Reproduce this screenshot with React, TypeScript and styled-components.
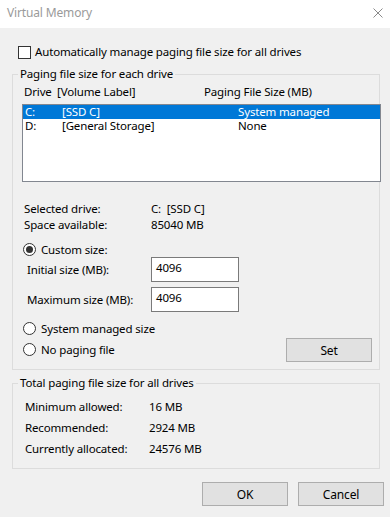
import React from 'react'
import styled, { createGlobalStyle } from 'styled-components'

const GlobalStyle = createGlobalStyle`
    html, body {
        margin: 0;
        padding: 0;
        background: #f0f0f0;
    }
    * {
        box-sizing: border-box;
    }
`

const Window = styled.div`
    width: 390px;
    height: 517px;
    background: #f0f0f0;
    font-family: "Noto Sans", "Open Sans", sans-serif;
    font-size: 11.5px;
    letter-spacing: -0.15px;
    color: #000;
    display: flex;
    flex-direction: column;
    overflow: hidden;
`

const TitleBar = styled.div`
    height: 28px;
    background: #fff;
    display: flex;
    align-items: center;
    justify-content: space-between;
    padding: 0 7px 3px 7px;
    flex-shrink: 0;
`

const Title = styled.span`
    color: #9a9a9a;
    font-size: 12px;
`

const CloseIcon = styled.svg`
    width: 10px;
    height: 10px;
`

const Body = styled.div`
    display: flex;
    flex-direction: column;
    padding: 16px 6px 0 12px;
`

const CheckRow = styled.label`
    display: flex;
    align-items: center;
    height: 16px;
    padding-left: 6px;
    gap: 4px;
    line-height: 16px;
`

const CheckBox = styled.span`
    width: 13px;
    height: 13px;
    border: 1px solid #333;
    background: #fff;
    flex-shrink: 0;
`

const Group = styled.fieldset<{ $top: number; $bottom: number }>`
    margin: ${p => p.$top}px 4px 0 0;
    padding: 0 0 ${p => p.$bottom}px 0;
    border: 1px solid #dcdcdc;
    min-width: 0;
`

const GroupTitle = styled.legend`
    margin-left: 5px;
    padding: 0 2px;
    line-height: 16px;
`

const ColumnHeader = styled.div`
    display: flex;
    margin-top: 2px;
    height: 16px;
    line-height: 16px;
    padding-left: 11px;
`

const ListBox = styled.div`
    margin: 4px 0 0 9px;
    width: 359px;
    height: 78px;
    background: #fff;
    border: 1px solid #828790;
`

const ListRow = styled.div<{ $selected?: boolean }>`
    display: flex;
    height: 14px;
    line-height: 14px;
    padding-left: 2px;
    background: ${p => (p.$selected ? '#0078d7' : 'transparent')};
    color: ${p => (p.$selected ? '#fff' : '#000')};
`

const Cell = styled.span<{ $width?: number }>`
    width: ${p => (p.$width ? `${p.$width}px` : 'auto')};
    flex-shrink: 0;
    white-space: pre;
`

const InfoGrid = styled.div<{ $top: number; $left: number; $col: number; $row: number }>`
    display: grid;
    grid-template-columns: ${p => p.$col}px auto;
    grid-auto-rows: ${p => p.$row}px;
    align-items: center;
    margin-top: ${p => p.$top}px;
    padding-left: ${p => p.$left}px;
    white-space: pre;
`

const RadioRow = styled.div<{ $top?: number }>`
    display: flex;
    align-items: center;
    gap: 5px;
    height: 16px;
    margin-top: ${p => p.$top ?? 0}px;
    padding-left: 10px;
`

const Radio = styled.span<{ $checked?: boolean }>`
    width: 13px;
    height: 13px;
    border-radius: 50%;
    border: 1px solid #333;
    background: #fff;
    flex-shrink: 0;
    display: flex;
    align-items: center;
    justify-content: center;

    &::after {
        content: '';
        width: 7px;
        height: 7px;
        border-radius: 50%;
        background: ${p => (p.$checked ? '#333' : 'transparent')};
    }
`

const FieldRow = styled.div<{ $top: number }>`
    display: flex;
    align-items: center;
    height: 25px;
    margin-top: ${p => p.$top}px;
`

const FieldLabel = styled.span`
    width: 138px;
    padding-left: 14px;
    flex-shrink: 0;
`

const TextBox = styled.div`
    width: 88px;
    height: 25px;
    background: #fff;
    border: 1px solid #7a7a7a;
    padding: 2px 0 0 4px;
    line-height: 16px;
`

const OptionsRow = styled.div`
    display: flex;
    justify-content: space-between;
    align-items: flex-start;
    margin-top: 8px;
    padding-right: 7px;
`

const RadioStack = styled.div`
    display: flex;
    flex-direction: column;
`

const Button = styled.button<{ $top?: number }>`
    width: 86px;
    height: 24px;
    margin-top: ${p => p.$top ?? 0}px;
    background: #e1e1e1;
    border: 1px solid #adadad;
    font-family: inherit;
    font-size: 12px;
    letter-spacing: -0.15px;
    color: #000;
    padding: 0;
`

const Footer = styled.div`
    display: flex;
    justify-content: flex-end;
    gap: 10px;
    margin-top: 13px;
`

const drives = [
    { letter: 'C:', label: '[SSD C]', size: 'System managed', selected: true },
    { letter: 'D:', label: '[General Storage]', size: 'None', selected: false },
]

export default function App() {
    return (
        <Window>
            <GlobalStyle />
            <TitleBar>
                <Title>Virtual Memory</Title>
                <CloseIcon viewBox="0 0 10 10">
                    <path d="M0.5 0.5 L9.5 9.5 M9.5 0.5 L0.5 9.5" stroke="#8a8a8a" strokeWidth="1" fill="none" />
                </CloseIcon>
            </TitleBar>
            <Body>
                <CheckRow>
                    <CheckBox />
                    Automatically manage paging file size for all drives
                </CheckRow>

                <Group $top={6} $bottom={7}>
                    <GroupTitle>Paging file size for each drive</GroupTitle>
                    <ColumnHeader>
                        <Cell $width={33}>Drive</Cell>
                        <Cell $width={147}>[Volume Label]</Cell>
                        <Cell>Paging File Size (MB)</Cell>
                    </ColumnHeader>
                    <ListBox>
                        {drives.map(d => (
                            <ListRow key={d.letter} $selected={d.selected}>
                                <Cell $width={37}>{d.letter}</Cell>
                                <Cell $width={176}>{d.label}</Cell>
                                <Cell>{d.size}</Cell>
                            </ListRow>
                        ))}
                    </ListBox>

                    <InfoGrid $top={18} $left={11} $col={127} $row={16}>
                        <span>Selected drive:</span>
                        <span>C:  [SSD C]</span>
                        <span>Space available:</span>
                        <span>85040 MB</span>
                    </InfoGrid>

                    <RadioRow $top={9}>
                        <Radio $checked />
                        Custom size:
                    </RadioRow>
                    <FieldRow $top={0}>
                        <FieldLabel>Initial size (MB):</FieldLabel>
                        <TextBox>4096</TextBox>
                    </FieldRow>
                    <FieldRow $top={5}>
                        <FieldLabel>Maximum size (MB):</FieldLabel>
                        <TextBox>4096</TextBox>
                    </FieldRow>

                    <OptionsRow>
                        <RadioStack>
                            <RadioRow>
                                <Radio />
                                System managed size
                            </RadioRow>
                            <RadioRow $top={5}>
                                <Radio />
                                No paging file
                            </RadioRow>
                        </RadioStack>
                        <Button $top={18}>Set</Button>
                    </OptionsRow>
                </Group>

                <Group $top={5} $bottom={9}>
                    <GroupTitle>Total paging file size for all drives</GroupTitle>
                    <InfoGrid $top={5} $left={12} $col={124} $row={21}>
                        <span>Minimum allowed:</span>
                        <span>16 MB</span>
                        <span>Recommended:</span>
                        <span>2924 MB</span>
                        <span>Currently allocated:</span>
                        <span>24576 MB</span>
                    </InfoGrid>
                </Group>

                <Footer>
                    <Button>OK</Button>
                    <Button>Cancel</Button>
                </Footer>
            </Body>
        </Window>
    )
}
